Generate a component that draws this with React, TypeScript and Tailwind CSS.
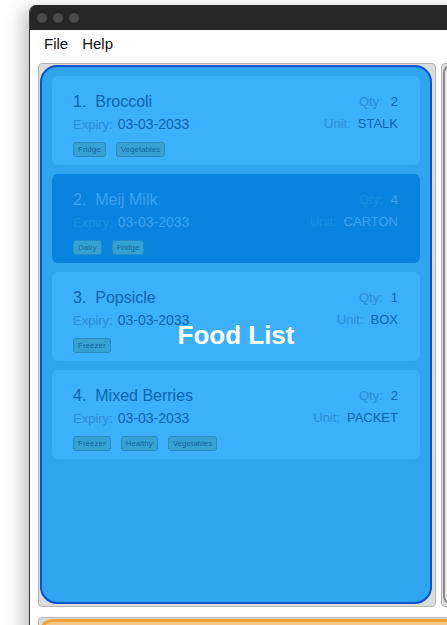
import React from "react";

type Food = {
  id: number;
  name: string;
  expiry: string;
  qty: number;
  unit: string;
  tags: string[];
};

const foods: Food[] = [
  { id: 1, name: "Broccoli", expiry: "03-03-2033", qty: 2, unit: "STALK", tags: ["Fridge", "Vegetables"] },
  { id: 2, name: "Meij Milk", expiry: "03-03-2033", qty: 4, unit: "CARTON", tags: ["Dairy", "Fridge"] },
  { id: 3, name: "Popsicle", expiry: "03-03-2033", qty: 1, unit: "BOX", tags: ["Freezer"] },
  { id: 4, name: "Mixed Berries", expiry: "03-03-2033", qty: 2, unit: "PACKET", tags: ["Freezer", "Healthy", "Vegetables"] },
];

function FoodCard({ food, selected }: { food: Food; selected?: boolean }) {
  const dark = selected ? "text-[#3aa2ee]" : "text-[#0b66ae]";
  const light = selected ? "text-[#1a90e2]" : "text-[#2a8fd6]";
  return (
    <div
      className={`h-[89px] rounded-[6px] pl-[21px] pr-[22px] pt-[16px] ${
        selected ? "bg-[#0984de]" : "bg-[#3db0fb]"
      }`}
    >
      <div className="flex items-center justify-between h-[20px]">
        <span className={`text-[16px] ${dark}`}>
          {food.id}.&nbsp;&nbsp;{food.name}
        </span>
        <span className="text-[13px]">
          <span className={light}>Qty:</span>
          <span className={`ml-[8px] ${dark}`}>{food.qty}</span>
        </span>
      </div>
      <div className="flex items-center justify-between h-[18px] mt-[3px]">
        <span className="text-[14px]">
          <span className={`text-[13px] ${light}`}>Expiry:</span>
          <span className={`ml-[5px] ${dark}`}>{food.expiry}</span>
        </span>
        <span className="text-[13px]">
          <span className={light}>Unit:</span>
          <span className={`ml-[7px] ${dark}`}>{food.unit}</span>
        </span>
      </div>
      <div className="flex gap-[10px] mt-[9px]">
        {food.tags.map((t) => (
          <span
            key={t}
            className="h-[15px] px-[4px] rounded-[3px] border border-[#2a8cc2] bg-[#36a2d4] text-[8px] leading-[13px] text-[#17679e]"
          >
            {t}
          </span>
        ))}
      </div>
    </div>
  );
}

export default function App() {
  return (
    <div
      className="relative w-[447px] h-[625px] overflow-hidden bg-white"
      style={{ fontFamily: '"Liberation Sans", Arial, sans-serif' }}
    >
      <div className="ml-[29px] mt-[5px] w-[440px] h-[640px] rounded-tl-[7px] overflow-hidden border-l border-[#3a3a3a] bg-white shadow-[-6px_4px_18px_rgba(0,0,0,0.25)]">
        <div className="h-[25px] bg-[#262626] flex items-center gap-[6px] pl-[7px]">
          <span className="w-[10px] h-[10px] rounded-full bg-[#4b4b4b]" />
          <span className="w-[10px] h-[10px] rounded-full bg-[#4b4b4b]" />
          <span className="w-[10px] h-[10px] rounded-full bg-[#4b4b4b]" />
        </div>
        <div className="h-[33px] flex items-center gap-[14px] pl-[14px] pb-[4px] text-[15px] text-[#111]">
          <span>File</span>
          <span>Help</span>
        </div>
        <div className="flex gap-[5px] pl-[8px]">
          <div className="w-[398px] h-[544px] shrink-0 rounded-[4px] border border-[#b5b5b5] bg-[#dcdcdc] pl-[1px] pr-[2px] pt-[1px]">
            <div className="relative w-[392px] h-[539px] rounded-[17px] border-2 border-[#0a52cc] bg-[#2ea5ee] px-[10px] pt-[9px] flex flex-col gap-[9px]">
              {foods.map((f) => (
                <FoodCard key={f.id} food={f} selected={f.id === 2} />
              ))}
              <div className="absolute left-0 right-0 top-[249px] text-center text-[26px] font-bold text-white">
                Food List
              </div>
            </div>
          </div>
          <div className="w-[20px] h-[544px] shrink-0 rounded-[4px] border border-[#b5b5b5] bg-[#dcdcdc] pl-[1px] pt-[1px]">
            <div className="w-full h-[539px] rounded-l-[8px] border-l-2 border-y-2 border-[#8a8a8a] bg-[#e9e9e9]" />
          </div>
        </div>
        <div className="ml-[8px] mt-[10px] h-[30px] rounded-[4px] border border-[#b5b5b5] bg-[#dcdcdc] pl-[1px] pt-[1px]">
          <div className="h-full rounded-tl-[12px] border-t-[3px] border-l-[3px] border-[#f7a437] bg-[#f6c98a]" />
        </div>
      </div>
    </div>
  );
}
